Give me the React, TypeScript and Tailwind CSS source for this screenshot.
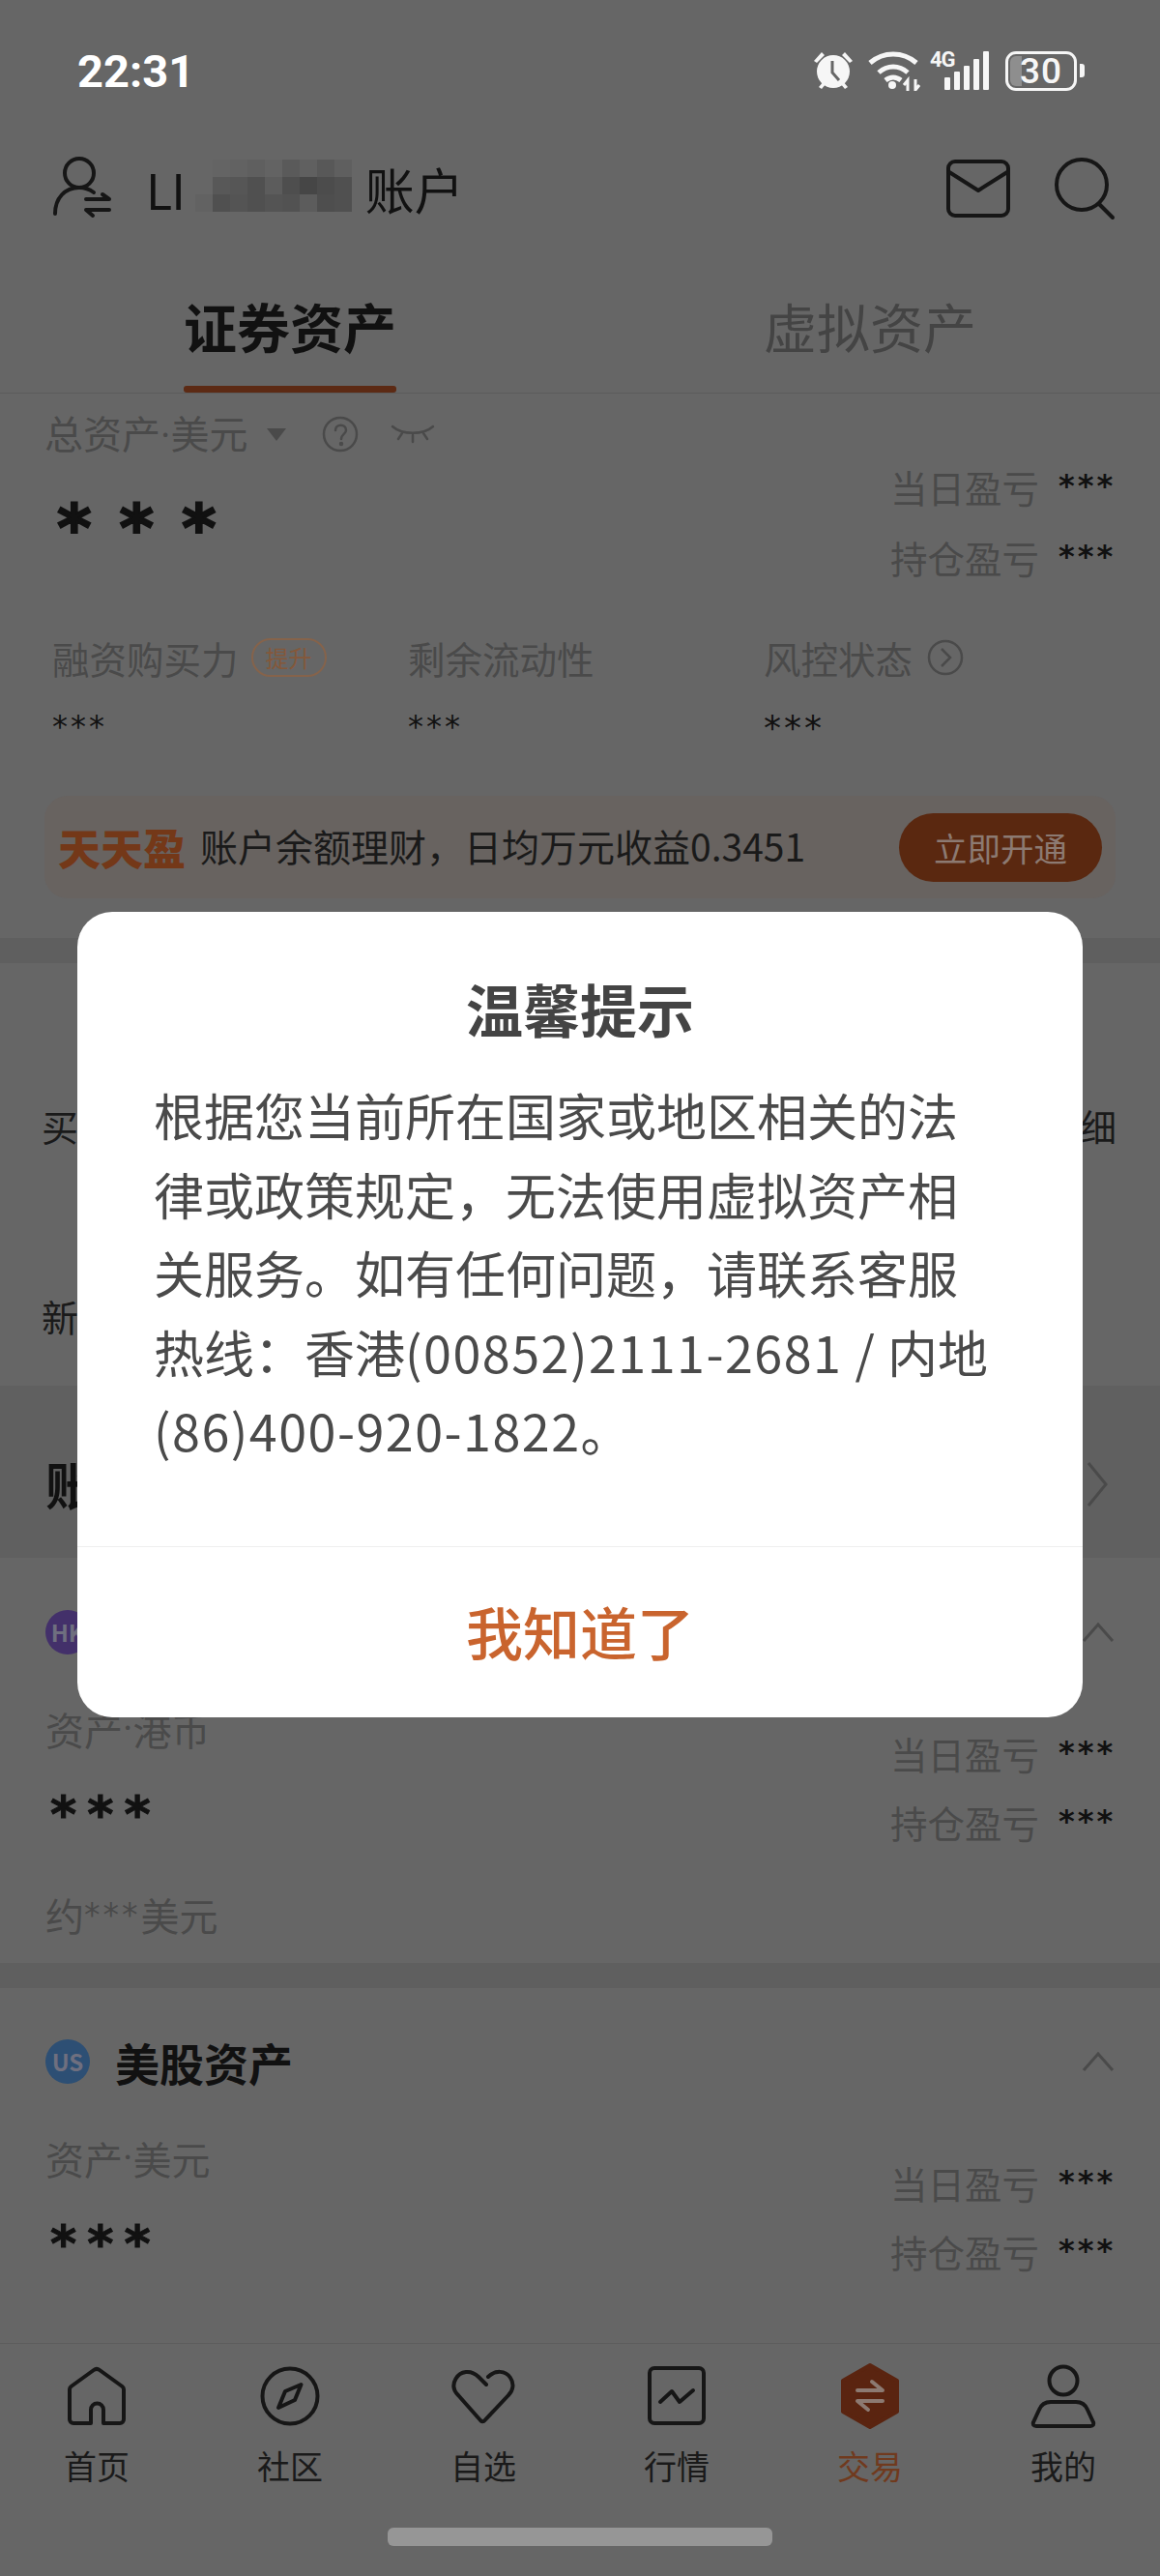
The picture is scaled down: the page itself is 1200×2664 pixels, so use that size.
import React from 'react';

const MOSAIC = [
  ['#666666', '#646464', '#626262', '#5f5f5f', '#636363', '#5a5a5a', '#606060', '#585858', '#5f5f5f'],
  ['#666666', '#585858', '#565656', '#505050', '#5c5c5c', '#4e4e4e', '#464646', '#4c4c4c', '#505050'],
  ['#626262', '#505050', '#545454', '#505050', '#545454', '#525252', '#5c5c5c', '#4e4e4e', '#505050'],
];

const Stars: React.FC<{ className?: string }> = ({ className = '' }) => (
  <span className={`font-['DejaVu_Sans',sans-serif] ${className}`}>***</span>
);

const Dot = () => <span className="font-['Roboto',sans-serif]">·</span>;

const Pnl: React.FC<{ label: string }> = ({ label }) => (
  <div className="flex h-[44px] items-center justify-end">
    <span className="text-[38.500px] leading-none text-[#4a4a4a]">{label}</span>
    <Stars className="ml-[20px] w-[58px] -translate-y-[1px] text-[32px] font-bold leading-none tracking-[3px] text-[#111111]" />
  </div>
);

const ChevronUp = () => (
  <svg width="34" height="24" viewBox="0 0 34 24" fill="none" stroke="#4a4a4a" strokeWidth="3">
    <path d="M2 21 17 4l15 17" />
  </svg>
);

const MarketCard: React.FC<{ badge: string; badgeColor: string; title: string; market: string }> = ({
  badge,
  badgeColor,
  title,
  market,
}) => (
  <div className="px-[47px]">
    <div className="flex h-[46px] items-center justify-between">
      <div className="flex items-center">
        <div className={`flex h-[46px] w-[46px] items-center justify-center rounded-full text-[24px] font-bold text-[#6f6f7f] ${badgeColor}`}>
          {badge}
        </div>
        <span className="ml-[26px] text-[46px] font-bold leading-none text-[#111111]">{title}</span>
      </div>
      <ChevronUp />
    </div>
    <div className="flex justify-between">
      <div>
        <div className="mt-[57px] flex h-[40px] items-center text-[40px] leading-none text-[#4a4a4a]">
          资产<Dot />{market}
        </div>
        <div className="mt-[36px] flex h-[50px] items-center pl-[5px]">
          <Stars className="translate-y-[7px] text-[52px] font-bold leading-none tracking-[11px] text-[#111111] [-webkit-text-stroke:1px_#111111]" />
        </div>
      </div>
      <div className="mt-[80px] flex flex-col gap-[27px]">
        <Pnl label="当日盈亏" />
        <Pnl label="持仓盈亏" />
      </div>
    </div>
  </div>
);

const NavIcon: React.FC<{ children: React.ReactNode }> = ({ children }) => (
  <svg width="70" height="70" viewBox="0 0 70 70" fill="none" stroke="#161616" strokeWidth="4" strokeLinecap="round" strokeLinejoin="round">
    {children}
  </svg>
);

const NAV = [
  {
    label: '首页',
    icon: <path d="M29 63H11a4 4 0 0 1-4-4V28a4 4 0 0 1 1.5-3L32 8a5 5 0 0 1 6 0l23.5 17a4 4 0 0 1 1.5 3v31a4 4 0 0 1-4 4H42V49a6.5 6.5 0 0 0-13 0z" />,
  },
  {
    label: '社区',
    icon: (
      <>
        <circle cx="35" cy="35" r="28.5" />
        <path d="M46.5 23 30 30 23 47l17-8z" />
      </>
    ),
  },
  {
    label: '自选',
    icon: <path d="M38 23 30 15C22 7 11 9 6.5 17 3 23 4 29 9 34l23 26q2.500 2.500 4.500 0L61 34c5-5 6-12 2-18-5-8-16-8-23-1" />,
  },
  {
    label: '行情',
    icon: (
      <>
        <rect x="7" y="6" width="56" height="57" rx="5" />
        <path d="M18 41 30 30l8 11 14-12" />
      </>
    ),
  },
  {
    label: '交易',
    active: true,
    icon: (
      <>
        <path d="M35 3 63 19v32L35 67 7 51V19z" fill="#5a2410" stroke="#5a2410" />
        <path d="M22 29h26l-11-9M48 40H22l11 9" stroke="#8c7a72" />
      </>
    ),
  },
  {
    label: '我的',
    icon: (
      <>
        <circle cx="35" cy="19" r="14.500" />
        <path d="M22 41h26c6 0 10 3 12 8l6 13c1 2 0 4-3 4H7c-3 0-4-2-3-4l6-13c2-5 6-8 12-8z" />
      </>
    ),
  },
];

export default function App() {
  return (
    <div className="relative h-[2664px] w-[1200px] overflow-hidden bg-[#666666] font-['Noto_Sans_CJK_SC','Noto_Sans',sans-serif]">
      <div className="flex h-[2423px] flex-col overflow-hidden">
        {/* status bar */}
        <div className="flex h-[140px] shrink-0 items-start justify-between pl-[80px] pr-[78px] pt-[50px]">
          <span className="font-['Roboto',sans-serif] text-[47px] font-bold leading-[48px] text-white">22:31</span>
          <div className="flex items-center pt-[2px]">
            <svg width="44" height="42" viewBox="0 0 44 42" fill="#f6f6f6">
              <circle cx="22" cy="22" r="17" />
              <path d="M2 11 10 2l3 3-8 8zM42 11 34 2l-3 3 8 8zM7 38l5-6 3 2-5 6zM37 38l-5-6-3 2 5 6z" />
              <path d="M21 11v12l7 8" fill="none" stroke="#666666" strokeWidth="3" />
            </svg>
            <svg className="ml-[14px]" width="54" height="42" viewBox="0 0 54 42" fill="none" stroke="#f6f6f6" strokeWidth="5">
              <path d="M2 13c14-12 34-12 48 0M11 23c9-8 21-8 30 0M18 31c5-4 11-4 16 0" />
              <circle cx="25" cy="36" r="4" fill="#f6f6f6" stroke="none" />
              <path d="M41 42V31l-4 5M49 30v11l4-5" strokeWidth="3" />
            </svg>
            <div className="relative ml-[10px] h-[42px] w-[64px]">
              <span className="absolute left-0 top-0 font-['Roboto',sans-serif] text-[22px] font-bold leading-[20px] tracking-[-1px] text-[#f6f6f6]">4G</span>
              <svg className="absolute left-[14px] top-0" width="50" height="42" viewBox="0 0 50 42" fill="#f6f6f6">
                <rect x="1" y="28" width="6" height="13" rx="1" />
                <rect x="11" y="22" width="6" height="19" rx="1" />
                <rect x="21" y="16" width="6" height="25" rx="1" />
                <rect x="31" y="9" width="6" height="32" rx="1" />
                <rect x="41" y="1" width="6" height="40" rx="1" />
              </svg>
            </div>
            <div className="relative ml-[14px] flex h-[41px] w-[74px] items-center justify-center overflow-hidden rounded-[11px] border-[3px] border-[#f6f6f6] font-['Roboto',sans-serif] text-[37px] font-medium leading-none text-[#f6f6f6]">
              <div className="absolute inset-y-[2px] left-[2px] w-[12px] rounded-l-[6px] bg-[#8e8e8e]" />
              <span className="relative tracking-[1px]">30</span>
            </div>
            <div className="ml-[3px] h-[14px] w-[5px] rounded-r-[3px] bg-[#f6f6f6]" />
          </div>
        </div>

        {/* account header */}
        <div className="flex h-[110px] shrink-0 items-center justify-between pl-[52px] pr-[46px]">
          <div className="flex items-center">
            <svg width="66" height="66" viewBox="0 0 66 66" fill="none" stroke="#161616" strokeWidth="4" strokeLinecap="round" strokeLinejoin="round">
              <circle cx="30" cy="17" r="15" />
              <path d="M5 59c0-16 10-27 25-27 6 0 11 2 15 5" />
              <path d="M37 44h24l-7-5M61 55H37l7 6" />
            </svg>
            <span className="ml-[33px] text-[50px] leading-none tracking-[-1px] text-[#111111]">LI</span>
            <svg className="ml-[11px] -translate-y-[3px]" width="162" height="54" viewBox="0 0 162 54">
              {MOSAIC.map((row, r) =>
                row.map((fill, c) => <rect key={`${r}-${c}`} x={c * 18} y={r * 18} width="18" height="18" fill={fill} />),
              )}
            </svg>
            <span className="ml-[14px] text-[51px] leading-none text-[#111111]">账户</span>
          </div>
          <div className="flex items-center">
            <svg width="68" height="62" viewBox="0 0 68 62" fill="none" stroke="#161616" strokeWidth="4" strokeLinecap="round" strokeLinejoin="round">
              <rect x="3" y="3" width="62" height="56" rx="7" />
              <path d="M4 14 34 33 64 14" />
            </svg>
            <svg className="ml-[44px]" width="64" height="66" viewBox="0 0 64 66" fill="none" stroke="#161616" strokeWidth="4" strokeLinecap="round">
              <circle cx="29" cy="29" r="26" />
              <path d="M47 49 61 63" />
            </svg>
          </div>
        </div>

        {/* tabs */}
        <div className="flex h-[157px] shrink-0 border-b border-[#5c5c5c]">
          <div className="flex flex-1 flex-col items-center justify-end">
            <span className="mb-[35px] text-[55px] font-bold leading-none text-[#111111]">证券资产</span>
            <div className="h-[7px] w-[220px] rounded-[3px] bg-[#5c2a14]" />
          </div>
          <div className="flex flex-1 flex-col items-center justify-end">
            <span className="mb-[42px] text-[55px] leading-none text-[#444444]">虚拟资产</span>
          </div>
        </div>

        {/* summary */}
        <div className="flex h-[234px] shrink-0 justify-between pl-[46px] pr-[47px]">
          <div>
            <div className="mt-[20px] flex h-[44px] items-center">
              <span className="text-[40px] leading-none text-[#4a4a4a]">总资产<Dot />美元</span>
              <span className="ml-[20px] h-0 w-0 border-x-[10px] border-t-[13px] border-x-transparent border-t-[#4a4a4a]" />
              <svg className="ml-[37px]" width="38" height="38" viewBox="0 0 38 38" fill="none" stroke="#4a4a4a" strokeWidth="2.500" strokeLinecap="round">
                <circle cx="19" cy="19" r="17" />
                <path d="M14 15c0-7 11-7 11 0 0 4-5 4-5 9" />
                <circle cx="20" cy="29" r="1" />
              </svg>
              <svg className="ml-[33px]" width="46" height="22" viewBox="0 0 46 22" fill="none" stroke="#4a4a4a" strokeWidth="2.500" strokeLinecap="round">
                <path d="M2 3c10 9 32 9 42 0M12 10 8 16M23 12v7M34 10l4 6" />
              </svg>
            </div>
            <div className="mt-[37px] flex h-[60px] items-center pl-[13px]">
              <Stars className="translate-y-[9px] text-[68px] font-bold leading-none tracking-[29px] text-[#111111] [-webkit-text-stroke:2px_#111111]" />
            </div>
          </div>
          <div className="mt-[74px] flex flex-col gap-[29px]">
            <Pnl label="当日盈亏" />
            <Pnl label="持仓盈亏" />
          </div>
        </div>

        <div className="grid h-[182px] shrink-0 grid-cols-3 pl-[54px] pr-[42px] pt-[17px]">
          <div>
            <div className="flex h-[44px] items-center">
              <span className="text-[38.500px] leading-none text-[#4a4a4a]">融资购买力</span>
              <span className="ml-[13px] flex h-[40px] w-[78px] shrink-0 items-center justify-center rounded-full border-2 border-[#85634b] text-[24px] leading-none text-[#84583a]">提升</span>
            </div>
            <Stars className="mt-[33px] block h-[30px] text-[32px] leading-none tracking-[3px] text-[#111111]" />
          </div>
          <div>
            <div className="flex h-[44px] items-center text-[38.500px] leading-none text-[#4a4a4a]">剩余流动性</div>
            <Stars className="mt-[33px] block h-[30px] text-[32px] leading-none tracking-[3px] text-[#111111]" />
          </div>
          <div>
            <div className="flex h-[44px] items-center">
              <span className="text-[38.500px] leading-none text-[#4a4a4a]">风控状态</span>
              <svg className="ml-[15px]" width="38" height="38" viewBox="0 0 38 38" fill="none" stroke="#4a4a4a" strokeWidth="2.500">
                <circle cx="19" cy="19" r="17" />
                <path d="m15 10 9 9-9 9" />
              </svg>
            </div>
            <Stars className="mt-[33px] block h-[30px] text-[36px] leading-none tracking-[3px] text-[#111111]" />
          </div>
        </div>

        {/* tiantianying banner */}
        <div className="mx-[46px] flex h-[106px] shrink-0 items-center justify-between rounded-[24px] bg-[#686360] pl-[14px] pr-[14px]">
          <div className="flex items-center">
            <span className="text-[44px] font-black leading-none text-[#743818]">天天盈</span>
            <span className="ml-[15px] -translate-y-[2px] text-[39px] leading-none text-[#1a1a1a]">账户余额理财，日均万元收益0.3451</span>
          </div>
          <div className="flex h-[71px] w-[210px] items-center justify-center rounded-full bg-[#5a2810] text-[34.500px] leading-none text-[#8c7a72]">立即开通</div>
        </div>

        {/* sections mostly hidden by the dialog */}
        <div className="mt-[41px] h-[26px] shrink-0 bg-[#5f5f5f]" />
        <div className="mt-[146px] flex h-[44px] shrink-0 items-center justify-between pl-[43px] pr-[45px] text-[38px] leading-none text-[#1a1a1a]">
          <span>买</span>
          <span>细</span>
        </div>
        <div className="mt-[153px] flex h-[44px] shrink-0 items-center pl-[43px] text-[38px] leading-none text-[#1a1a1a]">新</div>
        <div className="mt-[50px] flex h-[178px] shrink-0 items-center justify-between bg-[#606060] pl-[47px] pr-[54px] pt-[26px]">
          <span className="text-[52px] font-bold leading-none text-[#111111]">账户</span>
          <svg width="22" height="48" viewBox="0 0 22 48" fill="none" stroke="#4a4a4a" strokeWidth="3">
            <path d="m2 2 18 22L2 46" />
          </svg>
        </div>

        <div className="mt-[54px] shrink-0">
          <MarketCard badge="HK" badgeColor="bg-[#43306a]" title="港股资产" market="港币" />
        </div>
        <div className="mt-[54px] flex h-[40px] shrink-0 items-center pl-[47px] text-[40px] leading-none text-[#4a4a4a]">
          约<Stars className="text-[33px] tracking-[3px]" />美元
        </div>
        <div className="mt-[30px] h-[26px] shrink-0 bg-[#5f5f5f]" />
        <div className="mt-[53px] shrink-0">
          <MarketCard badge="US" badgeColor="bg-[#2d4f74]" title="美股资产" market="美元" />
        </div>
      </div>

      {/* bottom nav */}
      <div className="border-t border-[#5c5c5c]">
        <div className="grid grid-cols-6 pt-[19px]">
          {NAV.map((item) => (
            <div key={item.label} className="flex flex-col items-center">
              <NavIcon>{item.icon}</NavIcon>
              <span className={`mt-[20px] text-[34px] leading-none ${item.active ? 'text-[#703a1e]' : 'text-[#1a1a1a]'}`}>{item.label}</span>
            </div>
          ))}
        </div>
        <div className="mx-auto mt-[47px] h-[19px] w-[398px] rounded-[6px] bg-[#969696]" />
      </div>

      {/* dialog */}
      <div className="absolute left-[80px] top-[943px] flex h-[833px] w-[1040px] flex-col rounded-[36px] bg-white">
        <div className="pt-[71px] text-center text-[59px] font-bold leading-[58px] text-[#444444]">温馨提示</div>
        <p className="mt-[40px] whitespace-nowrap pl-[79px] text-[52px] leading-[81.500px] text-[#4a4a4a]">
          根据您当前所在国家或地区相关的法
          <br />
          律或政策规定，无法使用虚拟资产相
          <br />
          关服务。如有任何问题，请联系客服
          <br />
          热线：香港<span className="tracking-[1.500px]">(00852)2111-2681 /</span> 内地
          <br />
          <span className="tracking-[1.500px]">(86)400-920-1822</span>。
        </p>
        <div className="mt-auto flex h-[177px] items-center justify-center border-t border-[#eeeeee] pb-[4px] text-[59px] font-medium leading-none text-[#c9642e]">我知道了</div>
      </div>
    </div>
  );
}
